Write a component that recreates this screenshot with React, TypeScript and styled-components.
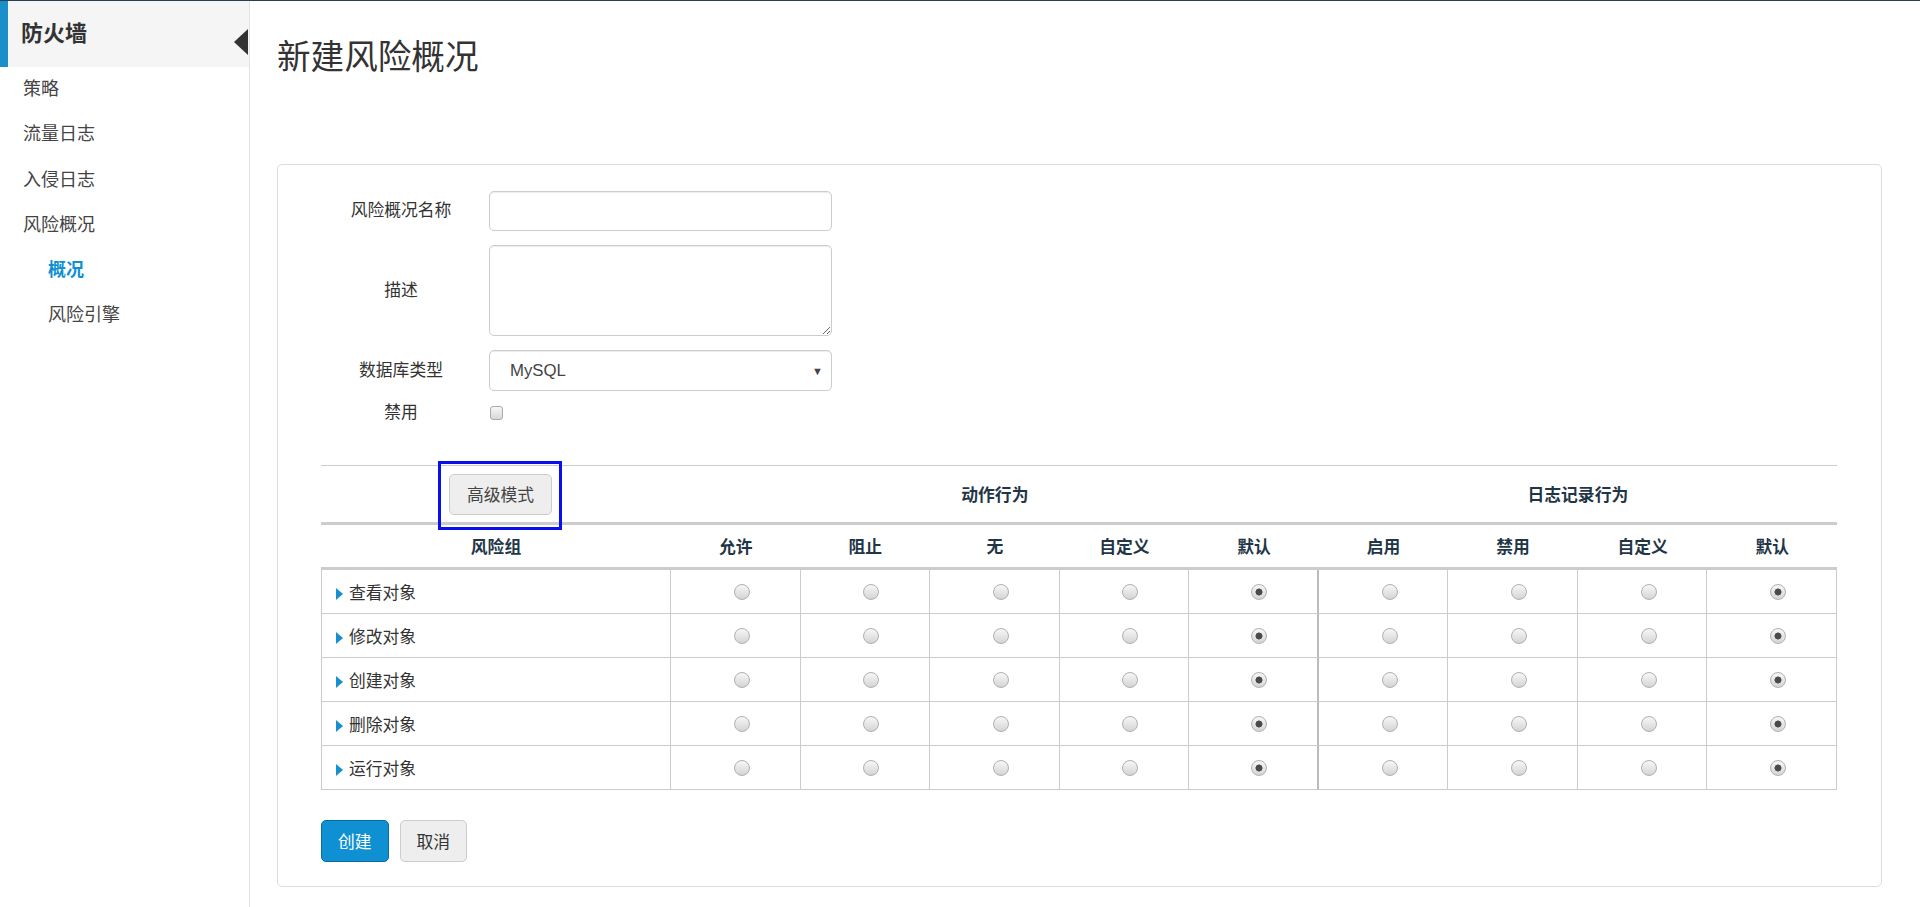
import React from 'react'
import styled, { createGlobalStyle } from 'styled-components'

const GlobalStyle = createGlobalStyle`
  html, body {
    margin: 0;
    padding: 0;
    background: #fff;
  }
  body {
    font-family: "Liberation Sans", "Noto Sans CJK SC", sans-serif;
    font-size: 16.8px;
    color: #333;
  }
  * {
    box-sizing: border-box;
  }
`

const Page = styled.div`
  display: flex;
  min-height: 907px;
  border-top: 1px solid #2c3e50;
`

const Sidebar = styled.aside`
  width: 250px;
  flex-shrink: 0;
  border-right: 1px solid #e3e3e3;
`

const SideHeader = styled.div`
  position: relative;
  height: 66px;
  display: flex;
  align-items: center;
  padding: 0 0 6px 13px;
  background: #f5f5f5;
  border-left: 8px solid #1a8fc9;
  font-size: 22px;
  font-weight: 700;
  color: #333;

  &::after {
    content: '';
    position: absolute;
    right: 1px;
    top: 28px;
    border-style: solid;
    border-width: 13px 14px 13px 0;
    border-color: transparent #333 transparent transparent;
  }
`

const Menu = styled.ul`
  list-style: none;
  margin: 0;
  padding: 0;
`

const MenuItem = styled.li<{ $sub?: boolean; $active?: boolean }>`
  height: 45.3px;
  line-height: 45px;
  padding-left: ${p => (p.$sub ? 48 : 23)}px;
  font-size: 18px;
  color: ${p => (p.$active ? '#0e90d2' : '#444')};
  font-weight: ${p => (p.$active ? 700 : 400)};
`

const Main = styled.main`
  flex: 1;
  padding: 38px 38px 20px 27px;
`

const Title = styled.h1`
  margin: 0 0 87px;
  font-size: 33.6px;
  line-height: 38px;
  font-weight: 400;
  color: #333;
`

const Card = styled.section`
  border: 1px solid #ddd;
  border-radius: 5px;
  padding: 26px 44px 24px 43px;
`

const Form = styled.div`
  display: flex;
  flex-direction: column;
  gap: 14px;
`

const FormRow = styled.div`
  display: grid;
  grid-template-columns: 160px 343px;
  column-gap: 8px;
  align-items: center;
`

const Label = styled.label`
  text-align: center;
  line-height: 16px;
  color: #333;
`

const fieldBase = `
  width: 100%;
  border: 1px solid #ccc;
  border-radius: 5px;
  box-shadow: inset 0 1px 1px rgba(0, 0, 0, 0.075);
  background: #fff;
  font: inherit;
  color: #555;
  outline: none;
`

const TextInput = styled.input`
  ${fieldBase}
  height: 40px;
  padding: 0 14px;
`

const TextArea = styled.textarea`
  ${fieldBase}
  display: block;
  height: 91px;
  padding: 8px 14px;
`

const SelectWrap = styled.div`
  position: relative;

  &::after {
    content: '▼';
    position: absolute;
    right: 9px;
    top: 50%;
    transform: translateY(-50%);
    font-size: 11px;
    color: #444;
    pointer-events: none;
  }
`

const Select = styled.select`
  ${fieldBase}
  appearance: none;
  height: 41px;
  padding: 0 20px;
  color: #444;
`

const CheckRow = styled(FormRow)`
  height: 16px;
`

const Checkbox = styled.input.attrs({ type: 'checkbox' })`
  appearance: none;
  margin: 0 0 0 1px;
  width: 13px;
  height: 14px;
  border: 1px solid #a9a9a9;
  border-radius: 3px;
  background: linear-gradient(#f6f6f6, #d8d8d8);
`

const Grid = styled.table`
  width: 100%;
  margin-top: 44px;
  border-collapse: separate;
  border-spacing: 0;
  table-layout: fixed;
`

const GroupHead = styled.th`
  height: 60px;
  padding: 0;
  border-top: 1px solid #ccc;
  border-bottom: 3px solid #ccc;
  font-weight: 700;
  color: #1f3647;
  text-align: center;
`

const ColHead = styled.th`
  height: 45px;
  padding: 0;
  border-bottom: 3px solid #ccc;
  font-weight: 700;
  color: #1f3647;
  text-align: center;
`

const Cell = styled.td<{ $split?: boolean }>`
  height: 44px;
  padding: 0;
  text-align: center;
  vertical-align: middle;
  border-bottom: 1px solid #ccc;
  border-right: ${p => (p.$split ? '2px solid #bbb' : '1px solid #ccc')};
`

const NameCell = styled(Cell)`
  text-align: left;
  padding-left: 14px;
  border-left: 1px solid #ccc;
`

const Caret = styled.span`
  display: inline-block;
  margin-right: 6px;
  border-style: solid;
  border-width: 6px 0 6px 7px;
  border-color: transparent transparent transparent #1790cd;
  vertical-align: -1px;
`

const Radio = styled.input.attrs({ type: 'radio' })`
  appearance: none;
  display: inline-block;
  margin: 0 0 0 13px;
  width: 16px;
  height: 16px;
  border-radius: 50%;
  border: 1px solid #b0b0b0;
  background: linear-gradient(#f7f7f7, #d4d4d4);
  vertical-align: middle;

  &:checked {
    background: radial-gradient(circle, #4a4a4a 0 3.2px, transparent 3.8px),
      linear-gradient(#f7f7f7, #d4d4d4);
  }
`

const Marked = styled.span`
  position: relative;
  display: inline-block;
  margin-left: 9px;

  &::after {
    content: '';
    position: absolute;
    inset: -13px -10px -15px -11px;
    border: 3px solid #0a0ff0;
    pointer-events: none;
  }
`

const Button = styled.button<{ $primary?: boolean }>`
  height: 42px;
  padding: 0 16px;
  font: inherit;
  font-size: 16.8px;
  font-weight: 400;
  border-radius: 5px;
  border: 1px solid ${p => (p.$primary ? '#0b6c9c' : '#ccc')};
  background: ${p => (p.$primary ? '#0e90d2' : '#eee')};
  color: ${p => (p.$primary ? '#fff' : '#333')};
  cursor: pointer;
`

const ModeButton = styled(Button)`
  height: 41px;
  padding: 0 17px;
  color: #444;
`

const Actions = styled.div`
  display: flex;
  gap: 11px;
  margin-top: 30px;
`

const actionCols = ['允许', '阻止', '无', '自定义', '默认']
const logCols = ['启用', '禁用', '自定义', '默认']
const groups = ['查看对象', '修改对象', '创建对象', '删除对象', '运行对象']

export default function App() {
  return (
    <>
      <GlobalStyle />
      <Page>
        <Sidebar>
          <SideHeader>防火墙</SideHeader>
          <Menu>
            <MenuItem>策略</MenuItem>
            <MenuItem>流量日志</MenuItem>
            <MenuItem>入侵日志</MenuItem>
            <MenuItem>风险概况</MenuItem>
            <MenuItem $sub $active>概况</MenuItem>
            <MenuItem $sub>风险引擎</MenuItem>
          </Menu>
        </Sidebar>
        <Main>
          <Title>新建风险概况</Title>
          <Card>
            <Form>
              <FormRow>
                <Label>风险概况名称</Label>
                <TextInput />
              </FormRow>
              <FormRow>
                <Label>描述</Label>
                <TextArea />
              </FormRow>
              <FormRow>
                <Label>数据库类型</Label>
                <SelectWrap>
                  <Select defaultValue="mysql">
                    <option value="mysql">MySQL</option>
                  </Select>
                </SelectWrap>
              </FormRow>
              <CheckRow>
                <Label>禁用</Label>
                <Checkbox />
              </CheckRow>
            </Form>

            <Grid>
              <colgroup>
                <col style={{ width: 350 }} />
              </colgroup>
              <thead>
                <tr>
                  <GroupHead>
                    <Marked>
                      <ModeButton>高级模式</ModeButton>
                    </Marked>
                  </GroupHead>
                  <GroupHead colSpan={5}>动作行为</GroupHead>
                  <GroupHead colSpan={4}>日志记录行为</GroupHead>
                </tr>
                <tr>
                  <ColHead>风险组</ColHead>
                  {actionCols.map((c, i) => (
                    <ColHead key={'a' + i}>{c}</ColHead>
                  ))}
                  {logCols.map((c, i) => (
                    <ColHead key={'l' + i}>{c}</ColHead>
                  ))}
                </tr>
              </thead>
              <tbody>
                {groups.map(g => (
                  <tr key={g}>
                    <NameCell>
                      <Caret />
                      {g}
                    </NameCell>
                    {actionCols.map((c, i) => (
                      <Cell key={'a' + i} $split={i === actionCols.length - 1}>
                        <Radio name={g + '-action'} defaultChecked={c === '默认'} />
                      </Cell>
                    ))}
                    {logCols.map((c, i) => (
                      <Cell key={'l' + i}>
                        <Radio name={g + '-log'} defaultChecked={c === '默认'} />
                      </Cell>
                    ))}
                  </tr>
                ))}
              </tbody>
            </Grid>

            <Actions>
              <Button $primary>创建</Button>
              <Button>取消</Button>
            </Actions>
          </Card>
        </Main>
      </Page>
    </>
  )
}
